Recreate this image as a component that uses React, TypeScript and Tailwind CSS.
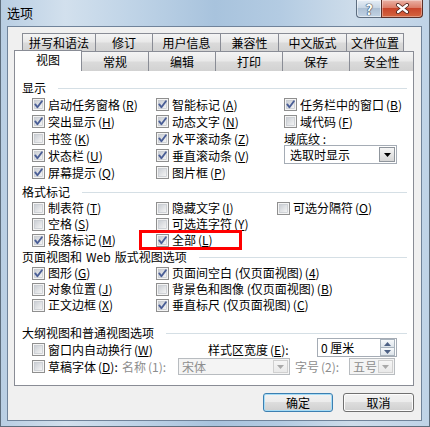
import type { ReactNode } from 'react';

const Key = ({ k }: { k: string }) => (
  <span className="ml-[2px]">
    (<span className="underline underline-offset-[1px]">{k}</span>)
  </span>
);

const Check = ({ on = false }: { on?: boolean }) => (
  <svg width="13" height="13" viewBox="0 0 13 13" className="shrink-0">
    <defs>
      <linearGradient id="cb-fill" x1="0" y1="0" x2="1" y2="1">
        <stop offset="0" stopColor="#c9cdd3" />
        <stop offset="1" stopColor="#f6f6f6" />
      </linearGradient>
    </defs>
    <rect x="0.5" y="0.5" width="12" height="12" fill="#f4f4f4" stroke="#8f8f8f" />
    <rect x="2.5" y="2.5" width="8" height="8" fill="url(#cb-fill)" stroke="#c2c6cc" strokeWidth="0.7" />
    {on && (
      <path
        d="M3.3 6.4 L5.4 9.3 L9.9 3.2"
        fill="none"
        stroke="#4a5e96"
        strokeWidth="1.9"
        strokeLinecap="round"
        strokeLinejoin="round"
      />
    )}
  </svg>
);

const Option = ({ label, k, on, h }: { label: string; k: string; on?: boolean; h: string }) => (
  <div className={`flex items-center whitespace-nowrap ${h}`}>
    <Check on={on} />
    <span className="ml-[3px]">
      {label}
      <Key k={k} />
    </span>
  </div>
);

const Heading = ({ children, className = '' }: { children: ReactNode; className?: string }) => (
  <div className={`flex items-center pr-[6px] ${className}`}>
    <span className="whitespace-nowrap">{children}</span>
    <div className="ml-[12px] h-px flex-1 bg-[#d5dfe5]" />
  </div>
);

const Arrow = ({ color = '#000' }: { color?: string }) => (
  <svg width="7" height="4" viewBox="0 0 7 4">
    <path d="M0 0 H7 L3.5 4 Z" fill={color} />
  </svg>
);

const Combo = ({ value, w, disabled }: { value: string; w: string; disabled?: boolean }) => (
  <div
    className={`flex items-center h-[17px] border ${w} ${
      disabled ? 'border-[#b8bcc0] bg-[#f4f4f4] text-[#8d8d8d]' : 'border-[#a5acb5] bg-white'
    }`}
  >
    <span className="flex-1 pl-[3px] whitespace-nowrap">{value}</span>
    <div
      className={`mr-px flex h-[13px] w-[15px] items-center justify-center border ${
        disabled
          ? 'border-[#d0d0d0] bg-[linear-gradient(#f6f6f6,#e9e9e9)]'
          : 'border-[#8f959c] bg-[linear-gradient(#f4f4f4,#d7d7d7)]'
      }`}
    >
      <Arrow color={disabled ? '#a9a9a9' : '#000'} />
    </div>
  </div>
);

const tabsTop = [
  { label: '拼写和语法', w: 'w-[73px]' },
  { label: '修订', w: 'w-[57px]' },
  { label: '用户信息', w: 'w-[68px]' },
  { label: '兼容性', w: 'w-[58px]' },
  { label: '中文版式', w: 'w-[68px]' },
  { label: '文件位置', w: 'w-[58px] border-r' },
];

const tabsBottom = [
  { label: '常规', w: 'w-[67px]' },
  { label: '编辑', w: 'w-[67px]' },
  { label: '打印', w: 'w-[67px]' },
  { label: '保存', w: 'w-[67px]' },
  { label: '安全性', w: 'w-[64px]' },
];

const tabBg = 'bg-[linear-gradient(#f4f4f4,#e9e9e9_45%,#dadada_55%,#d2d2d2)]';

export default function App() {
  return (
    <div className="relative h-[427px] w-[430px] overflow-hidden border-x border-b border-[#5e6d7c] bg-[linear-gradient(90deg,#b9cee3_0%,#d2e0ed_15%,#c0d4e7_30%,#a8c3dd_50%,#b3cbe2_65%,#cddcea_82%,#bfd3e7_100%)] font-['Noto_Sans_CJK_SC',sans-serif] text-[12px] leading-[14px] text-black">
      {/* title bar */}
      <div className="flex h-[26px]">
        <div className="flex-1 pl-[6px] pt-[6px] text-[13px]">选项</div>
        <div className="mr-[6px] flex h-[18px]">
          <div className="flex w-[25px] items-center justify-center rounded-bl-[4px] border border-r-0 border-t-0 border-[#5d6d7f] bg-[linear-gradient(#e6eef6,#c9d7e5_45%,#adc0d4_50%,#c2d3e4)] shadow-[inset_0_0_0_1px_rgba(255,255,255,0.5)]">
            <span className="text-[14px] font-bold leading-none text-white [text-shadow:0_0_1px_#2b3a4a,0_0_1px_#2b3a4a,0_0_1px_#2b3a4a]">?</span>
          </div>
          <div className="flex w-[42px] items-center justify-center rounded-br-[4px] border border-t-0 border-[#5b2f28] bg-[linear-gradient(#eab2a6,#dc7d68_45%,#c9452b_50%,#d4653f)] shadow-[inset_0_0_0_1px_rgba(255,255,255,0.35)]">
            <svg width="15" height="11" viewBox="0 0 15 11">
              <path d="M3 2 L12 9 M12 2 L3 9" stroke="#4a1f18" strokeWidth="4" strokeLinecap="round" />
              <path d="M3 2 L12 9 M12 2 L3 9" stroke="#fff" strokeWidth="2.4" strokeLinecap="round" />
            </svg>
          </div>
        </div>
      </div>

      {/* client area */}
      <div className="ml-[6px] h-[395px] w-[415px] border border-[#70839a] bg-[#f0f0f0]">
        <div className="pl-[6px] pt-[6px]">
          {/* tab rows */}
          <div className="ml-[8px] flex h-[18px]">
            {tabsTop.map((t) => (
              <div
                key={t.label}
                className={`flex items-center justify-center border-l border-t border-[#898c95] ${tabBg} ${t.w}`}
              >
                {t.label}
              </div>
            ))}
          </div>
          <div className="-mt-px flex h-[21px] items-end">
            <div className="relative z-10 flex h-[21px] w-[68px] items-center justify-center border-x border-t border-[#898c95] bg-white pb-[2px]">
              视图
            </div>
            {tabsBottom.map((t) => (
              <div
                key={t.label}
                className={`flex h-[20px] items-center justify-center border-r border-t border-[#898c95] ${tabBg} ${t.w}`}
              >
                {t.label}
              </div>
            ))}
          </div>

          {/* tab page */}
          <div className="-mt-px h-[316px] w-[400px] border border-[#898c95] bg-white pl-[7px] pt-[9px]">
            <Heading className="h-[16px]">显示</Heading>
            <div className="ml-[10px] flex">
              <div className="flex w-[124px] flex-col">
                <Option h="h-[17px]" label="启动任务窗格" k="R" on />
                <Option h="h-[17px]" label="突出显示" k="H" on />
                <Option h="h-[17px]" label="书签" k="K" />
                <Option h="h-[17px]" label="状态栏" k="U" on />
                <Option h="h-[17px]" label="屏幕提示" k="Q" on />
              </div>
              <div className="flex w-[128px] flex-col">
                <Option h="h-[17px]" label="智能标记" k="A" on />
                <Option h="h-[17px]" label="动态文字" k="N" on />
                <Option h="h-[17px]" label="水平滚动条" k="Z" on />
                <Option h="h-[17px]" label="垂直滚动条" k="V" on />
                <Option h="h-[17px]" label="图片框" k="P" />
              </div>
              <div className="flex flex-col">
                <Option h="h-[17px]" label="任务栏中的窗口" k="B" on />
                <Option h="h-[17px]" label="域代码" k="F" />
                <div className="flex h-[17px] items-center whitespace-nowrap">
                  域底纹<span className="underline underline-offset-[1px]">&nbsp;</span>:
                </div>
                <div className="-mt-[2px] flex h-[19px] w-[113px] items-center border border-[#a5acb5] bg-white">
                  <span className="flex-1 pl-[5px]">选取时显示</span>
                  <div className="mr-px flex h-[15px] w-[16px] items-center justify-center border border-[#8f959c] bg-[linear-gradient(#f6f6f6,#d6d6d6)]">
                    <Arrow />
                  </div>
                </div>
              </div>
            </div>

            <Heading className="mt-[3px] h-[16px]">格式标记</Heading>
            <div className="ml-[10px] flex">
              <div className="flex w-[124px] flex-col">
                <Option h="h-[16px]" label="制表符" k="T" />
                <Option h="h-[16px]" label="空格" k="S" />
                <Option h="h-[16px]" label="段落标记" k="M" on />
              </div>
              <div className="flex w-[121px] flex-col">
                <Option h="h-[16px]" label="隐藏文字" k="I" />
                <Option h="h-[16px]" label="可选连字符" k="Y" />
                <Option h="h-[16px]" label="全部" k="L" on />
              </div>
              <div className="flex flex-col">
                <Option h="h-[16px]" label="可选分隔符" k="O" />
              </div>
            </div>

            <Heading className="mt-[1px] h-[16px]">
              页面视图和<span className="mx-[4px]">Web</span>版式视图选项
            </Heading>
            <div className="ml-[10px] flex">
              <div className="flex w-[124px] flex-col">
                <Option h="h-[16px]" label="图形" k="G" on />
                <Option h="h-[16px]" label="对象位置" k="J" />
                <Option h="h-[16px]" label="正文边框" k="X" />
              </div>
              <div className="flex flex-col">
                <Option h="h-[16px]" label="页面间空白 (仅页面视图)" k="4" on />
                <Option h="h-[16px]" label="背景色和图像 (仅页面视图)" k="B" />
                <Option h="h-[16px]" label="垂直标尺 (仅页面视图)" k="C" on />
              </div>
            </div>

            <Heading className="mt-[13px] h-[14px]">大纲视图和普通视图选项</Heading>
            <div className="ml-[10px] mt-px flex h-[17px] items-center whitespace-nowrap">
              <div className="w-[176px]">
                <Option h="h-[17px]" label="窗口内自动换行" k="W" />
              </div>
              <div className="w-[109px]">
                样式区宽度<Key k="E" />:
              </div>
              <div className="mb-[4px] flex h-[19px] w-[80px] items-center border border-[#a5acb5] bg-white">
                <span className="flex-1 pl-[3px]">0 厘米</span>
                <div className="mr-px flex h-[17px] w-[15px] flex-col">
                  <div className="flex flex-1 items-center justify-center border border-[#a9b3bd] bg-[linear-gradient(#f7f9fb,#dde4ea)]">
                    <svg width="7" height="4" viewBox="0 0 7 4">
                      <path d="M0 4 H7 L3.5 0 Z" fill="#4d6185" />
                    </svg>
                  </div>
                  <div className="-mt-px flex flex-1 items-center justify-center border border-[#a9b3bd] bg-[linear-gradient(#f7f9fb,#dde4ea)]">
                    <Arrow color="#4d6185" />
                  </div>
                </div>
              </div>
            </div>
            <div className="ml-[10px] -mt-px flex h-[19px] items-center whitespace-nowrap">
              <div className="w-[90px]">
                <div className="flex items-center">
                  <Check />
                  <span className="ml-[3px]">
                    草稿字体<Key k="D" />:
                  </span>
                </div>
              </div>
              <div className="w-[56px] text-[#8d8d8d]">
                名称<span className="ml-[2px]">(1)</span>:
              </div>
              <Combo value="宋体" w="w-[112px]" disabled />
              <div className="ml-[5px] w-[54px] text-[#8d8d8d]">
                字号<span className="ml-[2px]">(2)</span>:
              </div>
              <Combo value="五号" w="w-[46px]" disabled />
            </div>
          </div>

          {/* dialog buttons */}
          <div className="mt-[7px] flex w-[400px] justify-end gap-[10px]">
            <button className="h-[19px] w-[70px] rounded-[3px] border border-[#3c7fb1] bg-[linear-gradient(#f2f2f2,#ebebeb_50%,#dddddd_50%,#cfcfcf)] shadow-[inset_0_0_0_1px_#a6dcf6]">
              确定
            </button>
            <button className="h-[19px] w-[71px] rounded-[3px] border border-[#707070] bg-[linear-gradient(#f2f2f2,#ebebeb_50%,#dddddd_50%,#cfcfcf)] shadow-[inset_0_0_0_1px_#fcfcfc]">
              取消
            </button>
          </div>
        </div>
      </div>

      {/* red annotation box */}
      <div className="absolute left-[138px] top-[230px] h-[20px] w-[103px] border-[3px] border-[#f00]" />
    </div>
  );
}
